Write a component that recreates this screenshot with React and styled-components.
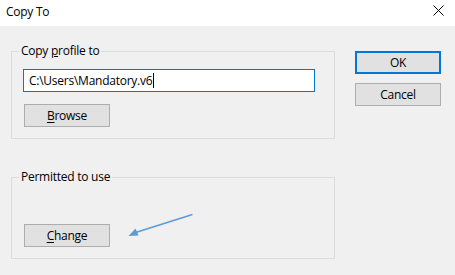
import React from "react";
import styled, { createGlobalStyle } from "styled-components";

const Global = createGlobalStyle`
  html, body { margin: 0; padding: 0; background: #f0f0f0; }
  body { font-family: "Segoe UI", "Open Sans", "Noto Sans", sans-serif; font-size: 12px; letter-spacing: -0.25px; color: #000; }
`;

const Window = styled.div`
  position: relative;
  width: 455px;
  height: 275px;
  background: #f0f0f0;
  overflow: hidden;
`;

const TitleBar = styled.div`
  height: 26px;
  background: #fff;
  display: flex;
  align-items: center;
  justify-content: space-between;
  padding: 0 11px 0 6px;
  box-sizing: border-box;
`;

const Title = styled.span`
  font-size: 12px;
  line-height: 16px;
  margin-top: -2px;
`;

const CloseIcon = styled.svg`
  width: 11px;
  height: 11px;
  display: block;
  margin-top: -5px;
`;

const Body = styled.div`
  display: flex;
  align-items: flex-start;
  gap: 20px;
  padding: 25px 0 0 11px;
`;

const LeftColumn = styled.div`
  display: flex;
  flex-direction: column;
  gap: 38px;
  width: 324px;
`;

const Group = styled.div`
  border: 1px solid #dcdcdc;
  padding: 0 11px ${(p) => p.$bottom}px;
  box-sizing: border-box;
  height: ${(p) => p.$height}px;
`;

const Legend = styled.div`
  width: fit-content;
  margin: -9px 0 0 -4px;
  padding: 0 2px;
  background: #f0f0f0;
  line-height: 16px;
  height: 16px;
`;

const TextBox = styled.div`
  margin-top: 10px;
  width: 292px;
  height: 23px;
  box-sizing: border-box;
  border: 1px solid #0078d7;
  background: #fff;
  padding: 0 5px;
  display: flex;
  align-items: center;
  line-height: 16px;
  white-space: nowrap;
`;

const Caret = styled.span`
  display: inline-block;
  width: 1px;
  height: 15px;
  background: #000;
  margin-left: 1px;
`;

const Button = styled.button`
  display: flex;
  align-items: center;
  justify-content: center;
  width: 86px;
  height: 23px;
  box-sizing: border-box;
  margin: ${(p) => p.$margin || 0};
  padding: 0;
  background: #e1e1e1;
  border: ${(p) => (p.$default ? "2px solid #0078d7" : "1px solid #adadad")};
  font-family: inherit;
  font-size: 12px;
  letter-spacing: inherit;
  line-height: 16px;
  color: #000;
  u { text-decoration-thickness: 1px; text-underline-offset: 2px; }
`;

const RightColumn = styled.div`
  display: flex;
  flex-direction: column;
  gap: 9px;
`;

const Arrow = styled.svg`
  position: absolute;
  left: 120px;
  top: 205px;
  width: 80px;
  height: 40px;
  overflow: visible;
`;

export default function App() {
  return (
    <>
      <Global />
      <Window>
        <TitleBar>
          <Title>Copy To</Title>
          <CloseIcon viewBox="0 0 11 11">
            <path d="M0.5 0.5 L10.5 10.5 M10.5 0.5 L0.5 10.5" stroke="#000" strokeWidth="1" fill="none" />
          </CloseIcon>
        </TitleBar>
        <Body>
          <LeftColumn>
            <Group $height={88} $bottom={11}>
              <Legend>
                Copy <u>p</u>rofile to
              </Legend>
              <TextBox>
                C:\Users\Mandatory.v6
                <Caret />
              </TextBox>
              <Button $margin="12px 0 0 1px">
                <u>B</u>rowse
              </Button>
            </Group>
            <Group $height={82} $bottom={11}>
              <Legend>Permitted to use</Legend>
              <Button $margin="39px 0 0 1px">
                <u>C</u>hange
              </Button>
            </Group>
          </LeftColumn>
          <RightColumn>
            <Button $default>OK</Button>
            <Button>Cancel</Button>
          </RightColumn>
        </Body>
        <Arrow viewBox="120 205 80 40">
          <line x1="192.5" y1="214.5" x2="134" y2="233" stroke="#5b9bd5" strokeWidth="1.4" />
          <polygon points="128.5,236 135.5,228.5 138.5,235.5" fill="#5b9bd5" />
        </Arrow>
      </Window>
    </>
  );
}
